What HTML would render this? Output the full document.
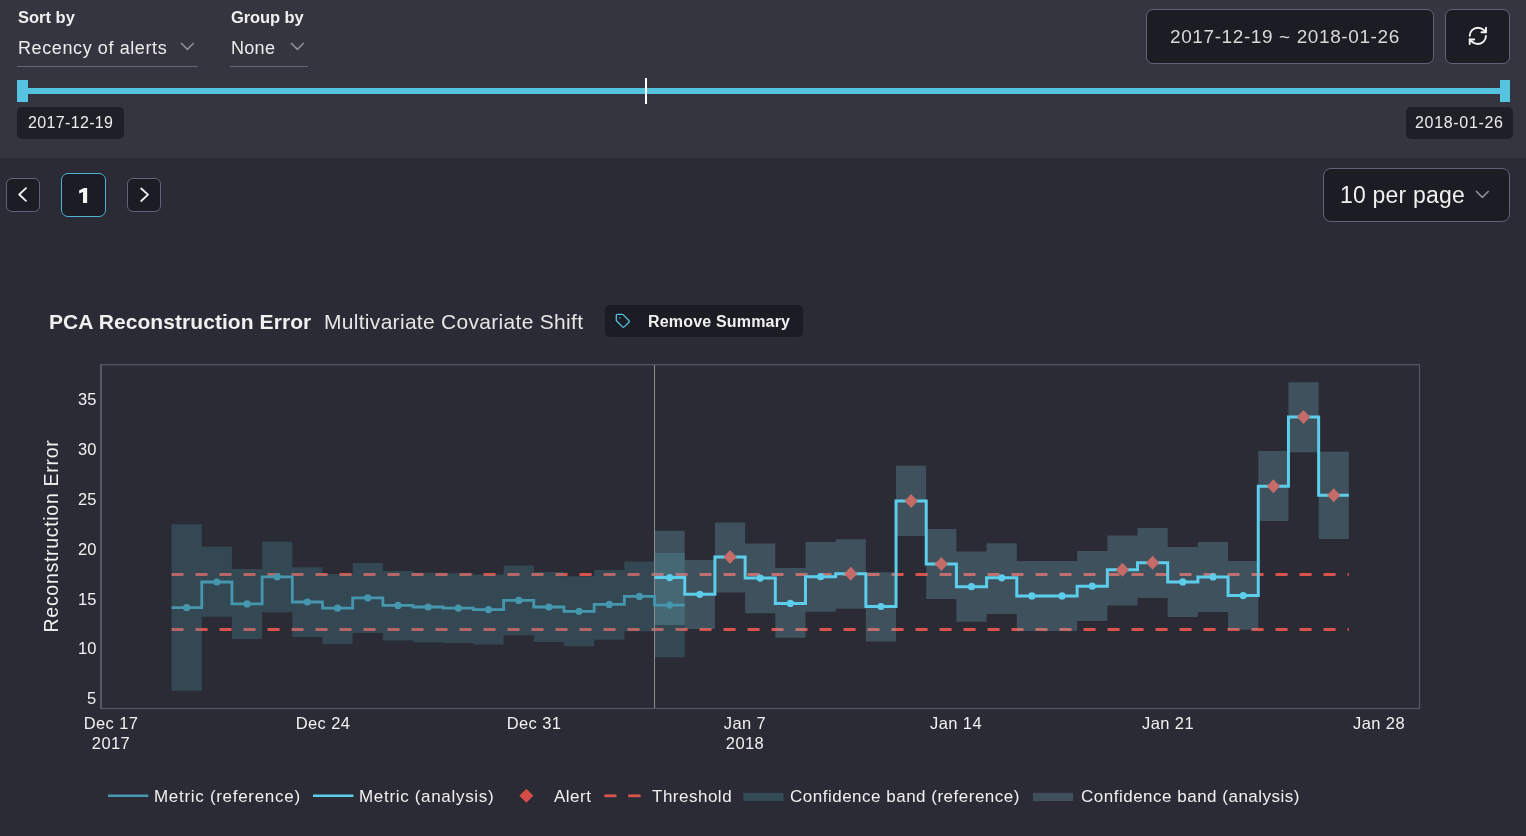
<!DOCTYPE html>
<html><head><meta charset="utf-8"><style>
html,body{margin:0;padding:0;}
body{width:1526px;height:836px;overflow:hidden;position:relative;background:#2b2b35;font-family:"Liberation Sans", sans-serif;}
</style></head><body>
<div style="position:absolute;left:0;top:0;width:1526px;height:158px;background:#353540"></div>
<div style="position:absolute;left:17.50px;top:9.23px;font-size:16.5px;line-height:1;font-weight:700;color:#f0f0f0;letter-spacing:0px;white-space:nowrap;will-change:transform;">Sort by</div>
<div style="position:absolute;left:17.50px;top:38.86px;font-size:18px;line-height:1;font-weight:400;color:#ececec;letter-spacing:0.6px;white-space:nowrap;will-change:transform;">Recency of alerts</div>
<div style="position:absolute;left:17px;top:65.5px;width:181px;height:1.5px;background:#60667a"></div>
<div style="position:absolute;left:230.70px;top:9.23px;font-size:16.5px;line-height:1;font-weight:700;color:#f0f0f0;letter-spacing:-0.1px;white-space:nowrap;will-change:transform;">Group by</div>
<div style="position:absolute;left:231.30px;top:38.86px;font-size:18px;line-height:1;font-weight:400;color:#ececec;letter-spacing:0.3px;white-space:nowrap;will-change:transform;">None</div>
<div style="position:absolute;left:230px;top:65.5px;width:78px;height:1.5px;background:#60667a"></div>
<svg style="position:absolute;left:179.2px;top:41.0px" width="16.8" height="10.4"><polyline points="2,2 8.4,8.4 14.8,2" fill="none" stroke="#8e8e96" stroke-width="1.6"/></svg>
<svg style="position:absolute;left:289.3px;top:41.0px" width="16.8" height="10.4"><polyline points="2,2 8.4,8.4 14.8,2" fill="none" stroke="#8e8e96" stroke-width="1.6"/></svg>
<div style="position:absolute;left:1146px;top:9px;width:286px;height:53px;border:1px solid #5f6578;border-radius:7px;background:#1c1c24"></div>
<div style="position:absolute;left:1169.50px;top:27.22px;font-size:19px;line-height:1;font-weight:400;color:#d9d9d9;letter-spacing:0.6px;white-space:nowrap;will-change:transform;">2017-12-19 ~ 2018-01-26</div>
<div style="position:absolute;left:1445px;top:9px;width:63px;height:53px;border:1px solid #5f6578;border-radius:7px;background:#1c1c24"></div>
<svg style="position:absolute;left:1467.3px;top:24.9px" width="21.7" height="21.7" viewBox="0 0 24 24" fill="none" stroke="#f4f4f4" stroke-width="2.1" stroke-linecap="round" stroke-linejoin="round"><path d="M3 12a9 9 0 0 1 9-9 9.75 9.75 0 0 1 6.74 2.74L21 8"/><path d="M21 3v5h-5"/><path d="M21 12a9 9 0 0 1-9 9 9.75 9.75 0 0 1-6.74-2.74L3 16"/><path d="M8 16H3v5"/></svg>
<div style="position:absolute;left:17px;top:88px;width:1493px;height:6px;background:#56c3e0"></div>
<div style="position:absolute;left:17px;top:80px;width:11px;height:22px;background:#56c3e0"></div>
<div style="position:absolute;left:1499.5px;top:80px;width:10.5px;height:22px;background:#56c3e0"></div>
<div style="position:absolute;left:645px;top:78px;width:2px;height:26px;background:#ffffff"></div>
<div style="position:absolute;left:17px;top:107px;width:107px;height:32px;border-radius:5px;background:#1f1f28"></div>
<div style="position:absolute;left:28.00px;top:114.56px;font-size:16px;line-height:1;font-weight:400;color:#ececec;letter-spacing:0.35px;white-space:nowrap;will-change:transform;">2017-12-19</div>
<div style="position:absolute;left:1406px;top:107px;width:107px;height:32px;border-radius:5px;background:#1f1f28"></div>
<div style="position:absolute;left:1415.00px;top:114.56px;font-size:16px;line-height:1;font-weight:400;color:#ececec;letter-spacing:0.68px;white-space:nowrap;will-change:transform;">2018-01-26</div>
<div style="position:absolute;left:6px;top:178px;width:32px;height:32px;border:1px solid #5f6578;border-radius:6px;background:#1c1c24"></div>
<svg style="position:absolute;left:0;top:160px" width="60" height="60"><polyline points="26,28.2 19.2,34.5 26,40.8" fill="none" stroke="#f4f4f4" stroke-width="1.8" stroke-linecap="round" stroke-linejoin="round"/></svg>
<div style="position:absolute;left:61px;top:173px;width:43px;height:42px;border:1.2px solid #4ab4d4;border-radius:7px;background:#1c1c24"></div>
<svg style="position:absolute;left:0;top:0" width="120" height="220"><polygon points="84.0,187.9 87.15,187.9 87.15,202.9 83.0,202.9 83.0,192.1 79.25,193.4 79.0,190.5" fill="#f4f4f4"/></svg>
<div style="position:absolute;left:127px;top:178px;width:32px;height:32px;border:1px solid #5f6578;border-radius:6px;background:#1c1c24"></div>
<svg style="position:absolute;left:120px;top:160px" width="60" height="60"><polyline points="21.2,28.5 28,34.7 21.2,41" fill="none" stroke="#f4f4f4" stroke-width="1.8" stroke-linecap="round" stroke-linejoin="round"/></svg>
<div style="position:absolute;left:1323px;top:168px;width:185px;height:52px;border:1px solid #5f6578;border-radius:8px;background:#1c1c24"></div>
<div style="position:absolute;left:1340.40px;top:184.13px;font-size:23px;line-height:1;font-weight:400;color:#f0f0f0;letter-spacing:0.2px;white-space:nowrap;will-change:transform;">10 per page</div>
<svg style="position:absolute;left:1474.3px;top:188.9px" width="16.7" height="10.4"><polyline points="2,2 8.35,8.4 14.7,2" fill="none" stroke="#8e8e96" stroke-width="1.6"/></svg>
<div style="position:absolute;left:49.20px;top:311.22px;font-size:21px;line-height:1;font-weight:700;color:#f0f0f0;letter-spacing:0.07px;white-space:nowrap;will-change:transform;">PCA Reconstruction Error</div>
<div style="position:absolute;left:324.30px;top:311.32px;font-size:21px;line-height:1;font-weight:400;color:#e6e6e6;letter-spacing:0.3px;white-space:nowrap;will-change:transform;">Multivariate Covariate Shift</div>
<div style="position:absolute;left:605px;top:305px;width:198px;height:32px;border-radius:5px;background:#1c1c24"></div>
<svg style="position:absolute;left:615.3px;top:313px" width="15.4" height="15.4" viewBox="0 0 24 24" fill="none" stroke="#56c3e0" stroke-width="2" stroke-linecap="round" stroke-linejoin="round"><path d="M12.586 2.586A2 2 0 0 0 11.172 2H4a2 2 0 0 0-2 2v7.172a2 2 0 0 0 .586 1.414l8.704 8.704a2.426 2.426 0 0 0 3.42 0l6.58-6.58a2.426 2.426 0 0 0 0-3.42z"/><circle cx="7.5" cy="7.5" r=".3" fill="#56c3e0"/></svg>
<div style="position:absolute;left:648.40px;top:313.66px;font-size:16px;line-height:1;font-weight:700;color:#f0f0f0;letter-spacing:0.18px;white-space:nowrap;will-change:transform;">Remove Summary</div>
<svg style="position:absolute;left:0;top:0" width="1526" height="836"><rect x="101" y="364.7" width="1318.5" height="343.8" fill="none" stroke="#535868" stroke-width="1.2"/><line x1="101" y1="364" x2="101" y2="709" stroke="#535868" stroke-width="2"/><line x1="171.57" y1="574.5" x2="1348.83" y2="574.5" stroke="#d9534b" stroke-width="3" stroke-dasharray="12,12"/><line x1="171.57" y1="629.6" x2="1348.83" y2="629.6" stroke="#d9534b" stroke-width="3" stroke-dasharray="12,12"/><path d="M171.57,524.30 L201.76,524.30 L201.76,546.80 L231.94,546.80 L231.94,569.10 L262.13,569.10 L262.13,541.80 L292.32,541.80 L292.32,567.20 L322.50,567.20 L322.50,573.90 L352.69,573.90 L352.69,563.00 L382.87,563.00 L382.87,571.00 L413.06,571.00 L413.06,572.70 L443.25,572.70 L443.25,573.20 L473.43,573.20 L473.43,574.40 L503.62,574.40 L503.62,565.50 L533.80,565.50 L533.80,571.90 L563.99,571.90 L563.99,576.30 L594.18,576.30 L594.18,569.90 L624.36,569.90 L624.36,561.50 L654.55,561.50 L654.55,552.90 L684.73,552.90 L684.73,657.30 L654.55,657.30 L654.55,631.20 L624.36,631.20 L624.36,639.80 L594.18,639.80 L594.18,646.30 L563.99,646.30 L563.99,641.90 L533.80,641.90 L533.80,635.20 L503.62,635.20 L503.62,644.40 L473.43,644.40 L473.43,643.00 L443.25,643.00 L443.25,642.20 L413.06,642.20 L413.06,640.60 L382.87,640.60 L382.87,633.00 L352.69,633.00 L352.69,643.90 L322.50,643.90 L322.50,636.90 L292.32,636.90 L292.32,612.30 L262.13,612.30 L262.13,639.10 L231.94,639.10 L231.94,616.80 L201.76,616.80 L201.76,690.70 L171.57,690.70Z" fill="rgba(79,159,181,0.25)"/><path d="M654.55,530.80 L684.73,530.80 L684.73,559.90 L714.92,559.90 L714.92,522.40 L745.11,522.40 L745.11,543.40 L775.29,543.40 L775.29,567.90 L805.48,567.90 L805.48,541.90 L835.66,541.90 L835.66,539.20 L865.85,539.20 L865.85,572.30 L896.04,572.30 L896.04,465.80 L926.22,465.80 L926.22,529.00 L956.41,529.00 L956.41,551.60 L986.59,551.60 L986.59,543.20 L1016.78,543.20 L1016.78,561.10 L1046.97,561.10 L1046.97,560.90 L1077.15,560.90 L1077.15,551.00 L1107.34,551.00 L1107.34,535.50 L1137.52,535.50 L1137.52,527.90 L1167.71,527.90 L1167.71,547.00 L1197.90,547.00 L1197.90,542.10 L1228.08,542.10 L1228.08,561.10 L1258.27,561.10 L1258.27,451.00 L1288.45,451.00 L1288.45,382.30 L1318.64,382.30 L1318.64,451.80 L1348.83,451.80 L1348.83,539.00 L1318.64,539.00 L1318.64,452.20 L1288.45,452.20 L1288.45,521.10 L1258.27,521.10 L1258.27,629.80 L1228.08,629.80 L1228.08,612.10 L1197.90,612.10 L1197.90,617.00 L1167.71,617.00 L1167.71,597.90 L1137.52,597.90 L1137.52,605.50 L1107.34,605.50 L1107.34,620.90 L1077.15,620.90 L1077.15,630.90 L1046.97,630.90 L1046.97,630.90 L1016.78,630.90 L1016.78,613.90 L986.59,613.90 L986.59,621.70 L956.41,621.70 L956.41,598.90 L926.22,598.90 L926.22,535.90 L896.04,535.90 L896.04,641.40 L865.85,641.40 L865.85,608.80 L835.66,608.80 L835.66,611.70 L805.48,611.70 L805.48,637.80 L775.29,637.80 L775.29,613.30 L745.11,613.30 L745.11,592.40 L714.92,592.40 L714.92,629.10 L684.73,629.10 L684.73,625.00 L654.55,625.00Z" fill="rgba(123,195,217,0.25)"/><line x1="654.55" y1="365" x2="654.55" y2="708" stroke="#8e8e8e" stroke-width="1"/><polyline points="171.57,607.70 201.76,607.70 201.76,582.00 231.94,582.00 231.94,603.90 262.13,603.90 262.13,576.80 292.32,576.80 292.32,602.00 322.50,602.00 322.50,608.20 352.69,608.20 352.69,597.80 382.87,597.80 382.87,605.40 413.06,605.40 413.06,607.00 443.25,607.00 443.25,608.20 473.43,608.20 473.43,609.60 503.62,609.60 503.62,600.40 533.80,600.40 533.80,607.00 563.99,607.00 563.99,611.30 594.18,611.30 594.18,604.40 624.36,604.40 624.36,596.40 654.55,596.40 654.55,605.10 684.73,605.10" fill="none" stroke="#4597ae" stroke-width="2.8" stroke-linejoin="miter"/><circle cx="186.66" cy="607.7" r="3.6" fill="#4597ae"/><circle cx="216.85" cy="582" r="3.6" fill="#4597ae"/><circle cx="247.04" cy="603.9" r="3.6" fill="#4597ae"/><circle cx="277.22" cy="576.8" r="3.6" fill="#4597ae"/><circle cx="307.41" cy="602" r="3.6" fill="#4597ae"/><circle cx="337.60" cy="608.2" r="3.6" fill="#4597ae"/><circle cx="367.78" cy="597.8" r="3.6" fill="#4597ae"/><circle cx="397.97" cy="605.4" r="3.6" fill="#4597ae"/><circle cx="428.15" cy="607" r="3.6" fill="#4597ae"/><circle cx="458.34" cy="608.2" r="3.6" fill="#4597ae"/><circle cx="488.52" cy="609.6" r="3.6" fill="#4597ae"/><circle cx="518.71" cy="600.4" r="3.6" fill="#4597ae"/><circle cx="548.90" cy="607" r="3.6" fill="#4597ae"/><circle cx="579.08" cy="611.3" r="3.6" fill="#4597ae"/><circle cx="609.27" cy="604.4" r="3.6" fill="#4597ae"/><circle cx="639.45" cy="596.4" r="3.6" fill="#4597ae"/><circle cx="669.64" cy="605.1" r="3.6" fill="#4597ae"/><polyline points="654.55,577.60 684.73,577.60 684.73,594.30 714.92,594.30 714.92,557.00 745.11,557.00 745.11,578.10 775.29,578.10 775.29,603.40 805.48,603.40 805.48,576.70 835.66,576.70 835.66,573.80 865.85,573.80 865.85,606.50 896.04,606.50 896.04,501.00 926.22,501.00 926.22,563.90 956.41,563.90 956.41,586.70 986.59,586.70 986.59,577.80 1016.78,577.80 1016.78,595.90 1046.97,595.90 1046.97,595.90 1077.15,595.90 1077.15,586.20 1107.34,586.20 1107.34,569.80 1137.52,569.80 1137.52,562.80 1167.71,562.80 1167.71,581.90 1197.90,581.90 1197.90,576.90 1228.08,576.90 1228.08,595.60 1258.27,595.60 1258.27,486.30 1288.45,486.30 1288.45,416.90 1318.64,416.90 1318.64,495.30 1348.83,495.30" fill="none" stroke="#5ccdea" stroke-width="3" stroke-linejoin="miter"/><circle cx="669.64" cy="577.6" r="3.6" fill="#5ccdea"/><circle cx="699.83" cy="594.3" r="3.6" fill="#5ccdea"/><polygon points="730.01,550.00 736.61,557.00 730.01,564.00 723.41,557.00" fill="#c56b68"/><circle cx="760.20" cy="578.1" r="3.6" fill="#5ccdea"/><circle cx="790.38" cy="603.4" r="3.6" fill="#5ccdea"/><circle cx="820.57" cy="576.7" r="3.6" fill="#5ccdea"/><polygon points="850.76,566.80 857.36,573.80 850.76,580.80 844.16,573.80" fill="#c56b68"/><circle cx="880.94" cy="606.5" r="3.6" fill="#5ccdea"/><polygon points="911.13,494.00 917.73,501.00 911.13,508.00 904.53,501.00" fill="#c56b68"/><polygon points="941.32,556.90 947.92,563.90 941.32,570.90 934.72,563.90" fill="#c56b68"/><circle cx="971.50" cy="586.7" r="3.6" fill="#5ccdea"/><circle cx="1001.69" cy="577.8" r="3.6" fill="#5ccdea"/><circle cx="1031.87" cy="595.9" r="3.6" fill="#5ccdea"/><circle cx="1062.06" cy="595.9" r="3.6" fill="#5ccdea"/><circle cx="1092.24" cy="586.2" r="3.6" fill="#5ccdea"/><polygon points="1122.43,562.80 1129.03,569.80 1122.43,576.80 1115.83,569.80" fill="#c56b68"/><polygon points="1152.62,555.80 1159.22,562.80 1152.62,569.80 1146.02,562.80" fill="#c56b68"/><circle cx="1182.80" cy="581.9" r="3.6" fill="#5ccdea"/><circle cx="1212.99" cy="576.9" r="3.6" fill="#5ccdea"/><circle cx="1243.17" cy="595.6" r="3.6" fill="#5ccdea"/><polygon points="1273.36,479.30 1279.96,486.30 1273.36,493.30 1266.76,486.30" fill="#c56b68"/><polygon points="1303.55,409.90 1310.15,416.90 1303.55,423.90 1296.95,416.90" fill="#c56b68"/><polygon points="1333.73,488.30 1340.33,495.30 1333.73,502.30 1327.13,495.30" fill="#c56b68"/><line x1="108" y1="795.8" x2="148.2" y2="795.8" stroke="#4597ae" stroke-width="2.6"/><line x1="313" y1="795.8" x2="353.4" y2="795.8" stroke="#5ccdea" stroke-width="2.6"/><polygon points="526.4,788.8 533.4,795.8 526.4,802.8 519.4,795.8" fill="#d24d46"/><line x1="604.4" y1="795.8" x2="616.5" y2="795.8" stroke="#d9534b" stroke-width="2.8"/><line x1="628.2" y1="795.8" x2="640.6" y2="795.8" stroke="#d9534b" stroke-width="2.8"/><rect x="743.3" y="792.9" width="40.2" height="8.1" fill="#354a57"/><rect x="1032.9" y="792.9" width="40.2" height="8.1" fill="#3f505c"/></svg>
<div style="position:absolute;right:1429.70px;top:391.45px;font-size:16.5px;line-height:1;font-weight:400;color:#f2f2f2;letter-spacing:0.1px;white-space:nowrap;will-change:transform;">35</div>
<div style="position:absolute;right:1429.70px;top:441.21px;font-size:16.5px;line-height:1;font-weight:400;color:#f2f2f2;letter-spacing:0.1px;white-space:nowrap;will-change:transform;">30</div>
<div style="position:absolute;right:1429.70px;top:490.98px;font-size:16.5px;line-height:1;font-weight:400;color:#f2f2f2;letter-spacing:0.1px;white-space:nowrap;will-change:transform;">25</div>
<div style="position:absolute;right:1429.70px;top:540.74px;font-size:16.5px;line-height:1;font-weight:400;color:#f2f2f2;letter-spacing:0.1px;white-space:nowrap;will-change:transform;">20</div>
<div style="position:absolute;right:1429.70px;top:590.51px;font-size:16.5px;line-height:1;font-weight:400;color:#f2f2f2;letter-spacing:0.1px;white-space:nowrap;will-change:transform;">15</div>
<div style="position:absolute;right:1429.70px;top:640.27px;font-size:16.5px;line-height:1;font-weight:400;color:#f2f2f2;letter-spacing:0.1px;white-space:nowrap;will-change:transform;">10</div>
<div style="position:absolute;right:1429.70px;top:690.04px;font-size:16.5px;line-height:1;font-weight:400;color:#f2f2f2;letter-spacing:0.1px;white-space:nowrap;will-change:transform;">5</div>
<div style="position:absolute;left:-188.80px;width:600px;text-align:center;top:715.13px;font-size:16.5px;line-height:1;font-weight:400;color:#f2f2f2;letter-spacing:0.4px;white-space:nowrap;will-change:transform;">Dec 17</div>
<div style="position:absolute;left:-188.80px;width:600px;text-align:center;top:735.03px;font-size:16.5px;line-height:1;font-weight:400;color:#f2f2f2;letter-spacing:0.4px;white-space:nowrap;will-change:transform;">2017</div>
<div style="position:absolute;left:22.50px;width:600px;text-align:center;top:715.13px;font-size:16.5px;line-height:1;font-weight:400;color:#f2f2f2;letter-spacing:0.4px;white-space:nowrap;will-change:transform;">Dec 24</div>
<div style="position:absolute;left:233.80px;width:600px;text-align:center;top:715.13px;font-size:16.5px;line-height:1;font-weight:400;color:#f2f2f2;letter-spacing:0.4px;white-space:nowrap;will-change:transform;">Dec 31</div>
<div style="position:absolute;left:445.11px;width:600px;text-align:center;top:715.13px;font-size:16.5px;line-height:1;font-weight:400;color:#f2f2f2;letter-spacing:0.4px;white-space:nowrap;will-change:transform;">Jan 7</div>
<div style="position:absolute;left:445.11px;width:600px;text-align:center;top:735.03px;font-size:16.5px;line-height:1;font-weight:400;color:#f2f2f2;letter-spacing:0.4px;white-space:nowrap;will-change:transform;">2018</div>
<div style="position:absolute;left:656.41px;width:600px;text-align:center;top:715.13px;font-size:16.5px;line-height:1;font-weight:400;color:#f2f2f2;letter-spacing:0.4px;white-space:nowrap;will-change:transform;">Jan 14</div>
<div style="position:absolute;left:867.71px;width:600px;text-align:center;top:715.13px;font-size:16.5px;line-height:1;font-weight:400;color:#f2f2f2;letter-spacing:0.4px;white-space:nowrap;will-change:transform;">Jan 21</div>
<div style="position:absolute;left:1079.01px;width:600px;text-align:center;top:715.13px;font-size:16.5px;line-height:1;font-weight:400;color:#f2f2f2;letter-spacing:0.4px;white-space:nowrap;will-change:transform;">Jan 28</div>
<div style="position:absolute;left:-49px;top:525.5px;width:200px;height:20px;transform:rotate(-90deg);transform-origin:100px 10px;text-align:center;font-size:19.5px;line-height:20px;color:#f2f2f2;letter-spacing:0.7px;white-space:nowrap;will-change:transform">Reconstruction Error</div>
<div style="position:absolute;left:154.30px;top:787.51px;font-size:17px;line-height:1;font-weight:400;color:#f0f0f0;letter-spacing:0.7px;white-space:nowrap;will-change:transform;">Metric (reference)</div>
<div style="position:absolute;left:359.40px;top:787.51px;font-size:17px;line-height:1;font-weight:400;color:#f0f0f0;letter-spacing:0.68px;white-space:nowrap;will-change:transform;">Metric (analysis)</div>
<div style="position:absolute;left:553.60px;top:787.51px;font-size:17px;line-height:1;font-weight:400;color:#f0f0f0;letter-spacing:0.5px;white-space:nowrap;will-change:transform;">Alert</div>
<div style="position:absolute;left:651.50px;top:787.51px;font-size:17px;line-height:1;font-weight:400;color:#f0f0f0;letter-spacing:0.5px;white-space:nowrap;will-change:transform;">Threshold</div>
<div style="position:absolute;left:790.20px;top:787.51px;font-size:17px;line-height:1;font-weight:400;color:#f0f0f0;letter-spacing:0.5px;white-space:nowrap;will-change:transform;">Confidence band (reference)</div>
<div style="position:absolute;left:1080.60px;top:787.51px;font-size:17px;line-height:1;font-weight:400;color:#f0f0f0;letter-spacing:0.5px;white-space:nowrap;will-change:transform;">Confidence band (analysis)</div>
</body></html>
